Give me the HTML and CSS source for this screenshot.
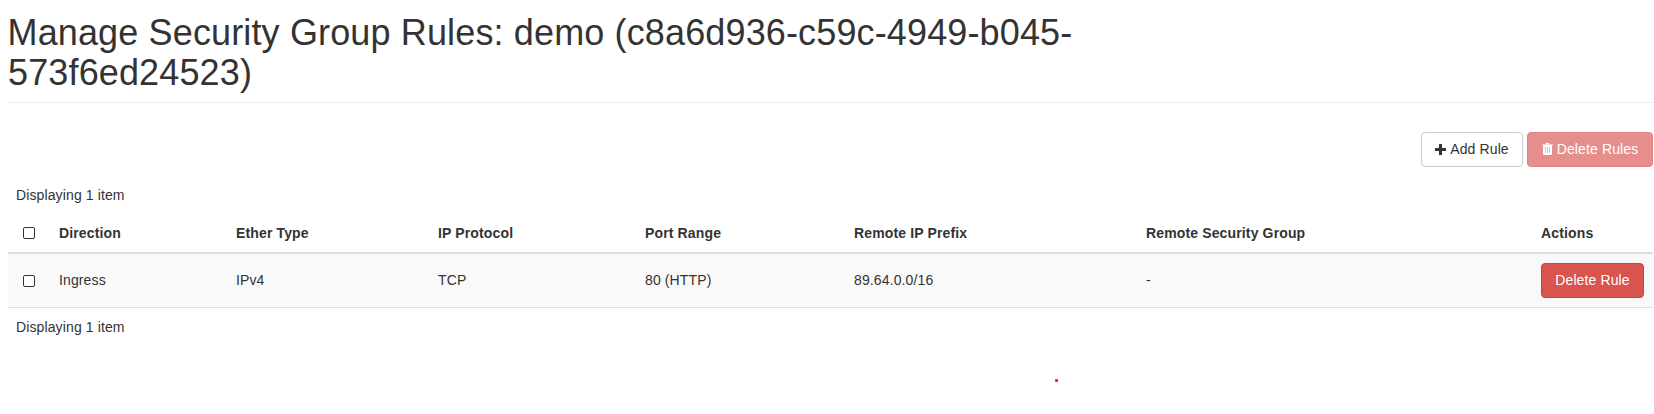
FILE: index.html
```html
<!DOCTYPE html>
<html lang="en">
<head>
<meta charset="utf-8">
<title>Manage Security Group Rules</title>
<link rel="stylesheet" href="styles.css">
</head>
<body>
<main class="page">
  <header class="page-header"><h1>Manage Security Group Rules: demo (c8a6d936-c59c-4949-b045-<br>573f6ed24523)</h1></header>
  <div class="toolbar">
    <button class="btn btn-default btn-add"><svg class="icon plus" viewBox="0 0 11 11"><path d="M4.500 0h2q.5 0 .5.5V4h3.500q.5 0 .5.5v2q0 .5-.5.5H7v3.500q0 .5-.5.5h-2q-.5 0-.5-.5V7H.5Q0 7 0 6.500v-2Q0 4 .5 4H4V.5Q4 0 4.500 0z"/></svg>Add Rule</button>
    <button class="btn btn-danger btn-delete-all disabled"><svg class="icon trash" viewBox="0 0 11 12"><path fill-rule="evenodd" d="M3.500 1.500 4 .3Q4.200 0 4.500 0h2q.3 0 .5.3l.5 1.200H11v1h-1v8q0 1.500-1.200 1.500H2.200Q1 12 1 10.500v-8H0v-1zM4.600 1.500h1.800L6.200.9H4.800zM3 4v6h.6V4zm2.200 0v6h.6V4zm2.200 0v6H8V4z"/></svg>Delete Rules</button>
  </div>
  <div class="count">Displaying 1 item</div>
  <table class="rules">
    <colgroup><col class="c-check"><col class="c-direction"><col class="c-ether"><col class="c-protocol"><col class="c-port"><col class="c-prefix"><col class="c-group"><col class="c-actions"></colgroup>
    <thead><tr><th><span class="checkbox"></span></th><th>Direction</th><th>Ether Type</th><th>IP Protocol</th><th>Port Range</th><th>Remote IP Prefix</th><th>Remote Security Group</th><th>Actions</th></tr></thead>
    <tbody><tr><td><span class="checkbox"></span></td><td>Ingress</td><td>IPv4</td><td>TCP</td><td>80 (HTTP)</td><td>89.64.0.0/16</td><td>-</td><td class="actions"><button class="btn btn-danger btn-row">Delete Rule</button></td></tr></tbody>
  </table>
  <div class="count count-bottom">Displaying 1 item</div>
  <span class="marker"></span>
</main>
</body>
</html>
```
FILE: styles.css
```css
* { box-sizing: border-box; }
body { margin: 0; background: #fff; color: #333; font: 14px/20px "Liberation Sans", Arial, sans-serif; letter-spacing: .12px; }
.page { position: relative; height: 414px; padding: 13px 1px 0 8px; overflow: hidden; }
.page-header { height: 90px; border-bottom: 1px solid #eee; }
h1 { margin: 0; font: 400 36px/40px "Liberation Sans", Arial, sans-serif; letter-spacing: .14px; text-indent: -.5px; }
.toolbar { display: flex; justify-content: flex-end; gap: 4px; margin-top: 29px; }
.btn { height: 35px; padding: 0 0 2px; border: 1px solid #ccc; border-radius: 4px; background: #fff; color: #333; font: inherit; letter-spacing: .12px; white-space: nowrap; }
.btn-add { width: 102px; }
.btn-delete-all { width: 126px; }
.btn-row { display: block; width: 103px; }
.btn-danger { border-color: #d43f3a; background: #d9534f; color: #fff; }
.disabled { opacity: .65; }
.icon { fill: currentColor; margin-right: 4px; vertical-align: -1px; }
.plus { width: 11px; height: 11px; }
.trash { width: 11px; height: 12px; }
.count { padding: 18px 8px 0; line-height: 20px; }
.rules { width: 100%; table-layout: fixed; border-collapse: separate; border-spacing: 0; margin-top: 8px; }
.rules th, .rules td { padding: 0 8px; text-align: left; white-space: nowrap; }
.rules th { height: 41px; border-bottom: 2px solid #ddd; font-weight: 700; letter-spacing: .14px; }
.rules td { height: 54px; padding-bottom: 2px; background: #f9f9f9; border-bottom: 1px solid #ddd; }
.rules .actions { padding-bottom: 0; }
.rules tr > :first-child { padding-left: 15px; }
.rules td .checkbox { margin-top: 3px; }
.c-check { width: 43px; }
.c-direction { width: 177px; }
.c-ether { width: 202px; }
.c-protocol { width: 207px; }
.c-port { width: 209px; }
.c-prefix { width: 292px; }
.c-group { width: 395px; }
.checkbox { display: block; width: 12px; height: 12px; border: 1px solid #333; border-radius: 2px; background: #fff; }
.count-bottom { padding-top: 9px; }
.marker { position: absolute; left: 1055px; top: 379px; width: 3px; height: 3px; border-radius: 1px; background: #ed1c24; }
```
